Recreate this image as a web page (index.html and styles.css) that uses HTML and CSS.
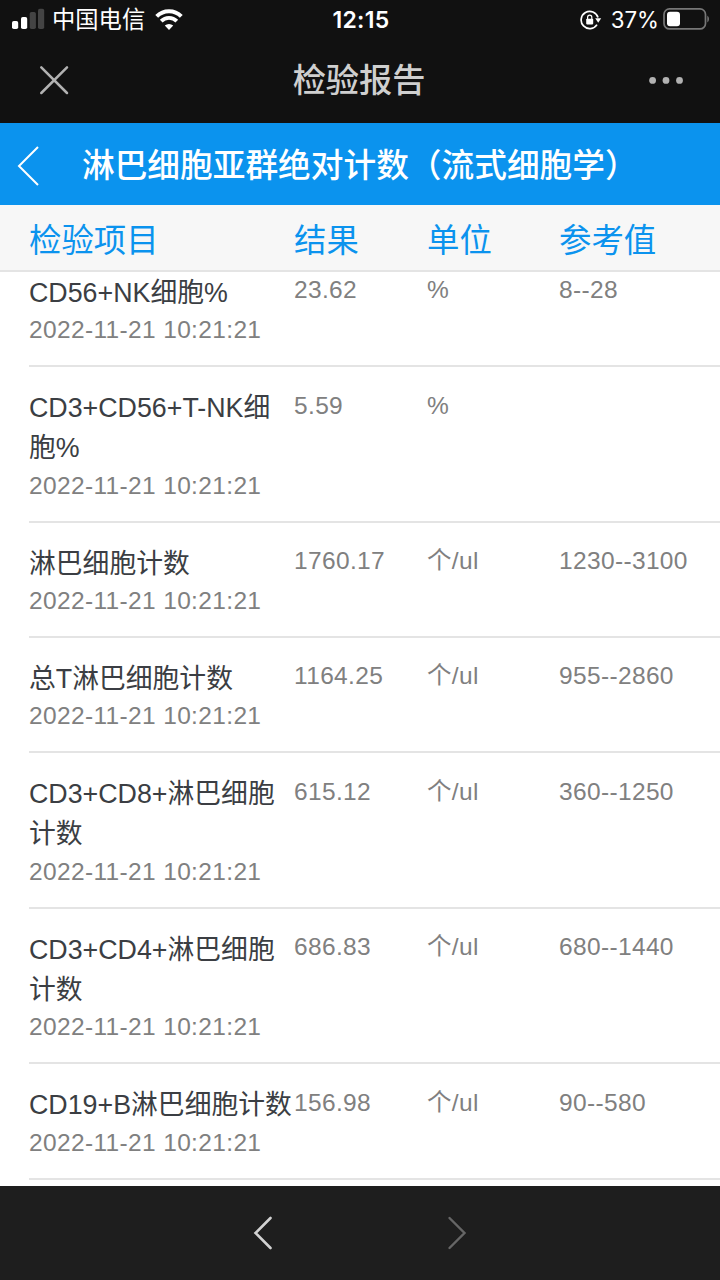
FILE: index.html
```html
<!DOCTYPE html>
<html lang="zh-CN">
<head>
    <meta charset="UTF-8">
    <meta name="viewport" content="width=device-width, initial-scale=1.0">
    <title>检验报告</title>
    <link rel="stylesheet" href="styles.css">
</head>
<body>
    <div class="container">
        <div class="top">
            <div class="status">
                <div class="carrier">
                    <svg class="signal" width="33" height="22" viewBox="0 0 33 22">
                        <rect x="0" y="13" width="6.2" height="8" rx="1.8" fill="#fff"/>
                        <rect x="9" y="9" width="6.2" height="12" rx="1.8" fill="#fff"/>
                        <rect x="17.7" y="4" width="6.2" height="17" rx="1.8" fill="#444"/>
                        <rect x="26" y="0.8" width="6.2" height="20.2" rx="1.8" fill="#444"/>
                    </svg>
                    <span>中国电信</span>
                    <svg class="wifi" width="28" height="22" viewBox="0 0 28 22">
                        <path d="M1.7 7.4a17.3 17.3 0 0 1 24.6 0" fill="none" stroke="#fff" stroke-width="4"/>
                        <path d="M6.2 12.2a11 11 0 0 1 15.6 0" fill="none" stroke="#fff" stroke-width="3.8"/>
                        <path d="M9.8 16.6a6 6 0 0 1 8.4 0L14 21z" fill="#fff"/>
                    </svg>
                </div>
                <div class="clock">12:15</div>
                <div class="power">
                    <svg class="lock" width="22" height="20" viewBox="0 0 22 20">
                        <path d="M17 14.6A8.6 8.6 0 1 1 18 7.6" fill="none" stroke="#fff" stroke-width="1.7"/>
                        <path d="M15.2 8.2h6L18.2 12.8z" fill="#fff"/>
                        <rect x="6.2" y="8.8" width="7" height="5.6" rx=".8" fill="#fff"/>
                        <path d="M7.6 9V7.2a2.1 2.1 0 0 1 4.2 0V9" fill="none" stroke="#fff" stroke-width="1.2"/>
                    </svg>
                    <span>37%</span>
                    <svg class="battery" width="47" height="22" viewBox="0 0 47 22">
                        <rect x="1" y="0.9" width="41.5" height="20" rx="5.5" fill="none" stroke="#777" stroke-width="1.7"/>
                        <rect x="4" y="3.7" width="13" height="14.5" rx="3" fill="#fff"/>
                        <path d="M44.3 7.5q1.7 1 1.7 3.5t-1.7 3.5z" fill="#777"/>
                    </svg>
                </div>
            </div>
            <div class="navbar">
                <svg width="30" height="30" viewBox="0 0 30 30">
                    <path d="M2.3 2.3L28 28M28 2.3L2.3 28" stroke="#b2b2b2" stroke-width="2.5" stroke-linecap="round"/>
                </svg>
                <h1>检验报告</h1>
                <svg width="36" height="8" viewBox="0 0 36 8">
                    <g fill="#b2b2b2">
                        <circle cx="3.6" cy="4.4" r="3.4"/>
                        <circle cx="17" cy="4.4" r="3.4"/>
                        <circle cx="30.5" cy="4.4" r="3.4"/>
                    </g>
                </svg>
            </div>
        </div>
        <div class="header">
            <svg width="22" height="40" viewBox="0 0 22 40">
                <path d="M21 1L2 20L21 39" fill="none" stroke="#fff" stroke-width="2"/>
            </svg>
            <h2>淋巴细胞亚群绝对计数（流式细胞学）</h2>
        </div>
        <div class="columns">
            <div>检验项目</div>
            <div>结果</div>
            <div>单位</div>
            <div>参考值</div>
        </div>
        <div class="list">
            <div class="row">
                <div class="item">
                    <div class="name">CD56+NK细胞%</div>
                    <div class="date">2022-11-21 10:21:21</div>
                </div>
                <div class="value">23.62</div>
                <div class="value">%</div>
                <div class="value">8--28</div>
            </div>
            <div class="row">
                <div class="item">
                    <div class="name">CD3+CD56+T-NK细胞%</div>
                    <div class="date">2022-11-21 10:21:21</div>
                </div>
                <div class="value">5.59</div>
                <div class="value">%</div>
                <div class="value"></div>
            </div>
            <div class="row">
                <div class="item">
                    <div class="name">淋巴细胞计数</div>
                    <div class="date">2022-11-21 10:21:21</div>
                </div>
                <div class="value">1760.17</div>
                <div class="value">个/ul</div>
                <div class="value">1230--3100</div>
            </div>
            <div class="row">
                <div class="item">
                    <div class="name">总T淋巴细胞计数</div>
                    <div class="date">2022-11-21 10:21:21</div>
                </div>
                <div class="value">1164.25</div>
                <div class="value">个/ul</div>
                <div class="value">955--2860</div>
            </div>
            <div class="row">
                <div class="item">
                    <div class="name">CD3+CD8+淋巴细胞计数</div>
                    <div class="date">2022-11-21 10:21:21</div>
                </div>
                <div class="value">615.12</div>
                <div class="value">个/ul</div>
                <div class="value">360--1250</div>
            </div>
            <div class="row">
                <div class="item">
                    <div class="name">CD3+CD4+淋巴细胞计数</div>
                    <div class="date">2022-11-21 10:21:21</div>
                </div>
                <div class="value">686.83</div>
                <div class="value">个/ul</div>
                <div class="value">680--1440</div>
            </div>
            <div class="row">
                <div class="item">
                    <div class="name">CD19+B淋巴细胞计数</div>
                    <div class="date">2022-11-21 10:21:21</div>
                </div>
                <div class="value">156.98</div>
                <div class="value">个/ul</div>
                <div class="value">90--580</div>
            </div>
        </div>
        <div class="bottom">
            <svg width="20" height="34" viewBox="0 0 20 34">
                <path d="M17.5 2L2.5 17L17.5 32" fill="none" stroke="#d2d2d2" stroke-width="2.6" stroke-linecap="round"/>
            </svg>
            <svg width="20" height="34" viewBox="0 0 20 34">
                <path d="M2.5 2L17.5 17L2.5 32" fill="none" stroke="#666" stroke-width="2.4" stroke-linecap="round"/>
            </svg>
        </div>
    </div>
</body>
</html>
```
FILE: styles.css
```css
*{
    margin: 0;
    padding: 0;
    box-sizing: border-box;
}
body{
    font-family: "Liberation Sans", "Noto Sans CJK SC", sans-serif;
    background: #fff;
}
svg{
    display: block;
    flex-shrink: 0;
}
.container{
    display: flex;
    flex-direction: column;
    width: 720px;
    height: 1280px;
    overflow: hidden;
}
.top{
    height: 123px;
    background: #111;
    flex-shrink: 0;
}
.status{
    display: grid;
    grid-template-columns: 1fr auto 1fr;
    align-items: center;
    height: 40px;
    padding: 0 10px 0 12px;
    color: #fff;
    font-size: 23px;
}
.signal, .battery{
    margin-top: -2px;
}
.carrier, .power{
    display: flex;
    align-items: center;
}
.carrier span{
    margin-left: 7px;
    font-size: 23.3px;
    line-height: 40px;
}
.wifi{
    margin-left: 10px;
}
.clock{
    font-family: Inter, sans-serif;
    font-weight: 600;
    font-size: 23px;
    letter-spacing: 0.3px;
}
.power{
    justify-content: flex-end;
    font-family: Inter, sans-serif;
}
.power span{
    margin: -2px 4px 0 9px;
    font-size: 22.3px;
}
.navbar{
    display: flex;
    justify-content: space-between;
    align-items: center;
    height: 80px;
    padding: 0 35px 0 39px;
}
.navbar h1{
    padding-top: 2px;
    font-size: 33.2px;
    font-weight: 500;
    line-height: 48px;
    color: #cfcfcf;
}
.header{
    display: flex;
    align-items: center;
    height: 82px;
    padding: 0 17px;
    background: #0b93ee;
    color: #fff;
    flex-shrink: 0;
}
.header svg{
    margin-top: 3px;
}
.header h2{
    margin-left: 43px;
    padding-top: 4px;
    font-size: 32.7px;
    font-weight: 500;
    line-height: 48px;
    white-space: nowrap;
}
.columns, .row{
    display: grid;
    grid-template-columns: 265px 133px 132px 1fr;
}
.columns{
    height: 67px;
    padding-left: 29px;
    background: #f7f7f7;
    border-bottom: 2px solid #e4e4e4;
    color: #0b93ee;
    font-size: 32.4px;
    line-height: 72px;
    flex-shrink: 0;
}
.list{
    flex: 1;
    min-height: 0;
    overflow: hidden;
}
.row{
    margin-left: 29px;
    padding: 20.5px 0 17.5px;
    border-bottom: 2px solid #e4e4e4;
}
/* the list is scrolled a little under the column titles */
.row:first-child{
    margin-top: -20.2px;
}
.name{
    padding-top: 0.4px;
    font-size: 26.8px;
    line-height: 40.3px;
    color: #3b3e43;
}
.date{
    font-size: 24.5px;
    letter-spacing: 0.35px;
    line-height: 34.6px;
    color: #808080;
}
.value{
    font-size: 24.5px;
    letter-spacing: 0.35px;
    line-height: 35px;
    color: #808080;
}
.bottom{
    display: flex;
    justify-content: center;
    align-items: center;
    gap: 174px;
    height: 94px;
    background: #1e1e1e;
    flex-shrink: 0;
}
```
